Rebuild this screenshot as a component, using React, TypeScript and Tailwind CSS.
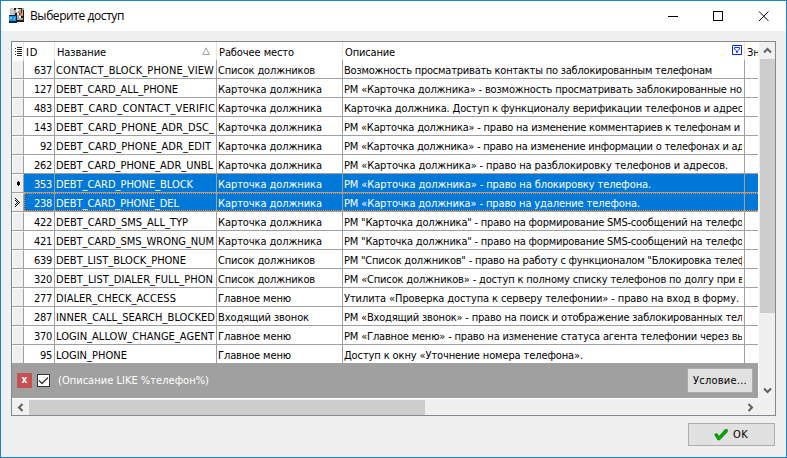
import { useLayoutEffect, useRef, useState } from "react";

/* Text run fitted to a given width by adjusting the tracking. */
function T({ w, children, className = "" }: { w: number; children: string; className?: string }) {
  const ref = useRef<HTMLSpanElement>(null);
  const [ls, setLs] = useState(0);
  useLayoutEffect(() => {
    const el = ref.current;
    if (el) setLs((w - el.getBoundingClientRect().width) / children.length);
  }, [w, children]);
  return (
    <span ref={ref} className={"inline-block whitespace-pre " + className} style={{ letterSpacing: ls }}>
      {children}
    </span>
  );
}

type Row = [string, string, number, string, number, string, number];
const SP: [string, number] = ["Список должников", 97];
const KD: [string, number] = ["Карточка должника", 104];
const GM: [string, number] = ["Главное меню", 73];
const rows: Row[] = [
  ["637", "CONTACT_BLOCK_PHONE_VIEW", 158, ...SP, "Возможность просматривать контакты по заблокированным телефонам", 368],
  ["127", "DEBT_CARD_ALL_PHONE", 122, ...KD, "РМ «Карточка должника» - возможность просматривать заблокированные но", 398],
  ["483", "DEBT_CARD_CONTACT_VERIFIC", 159, ...KD, "Карточка должника. Доступ к функционалу верификации телефонов и адрес", 399],
  ["143", "DEBT_CARD_PHONE_ADR_DSC_", 158, ...KD, "РМ «Карточка должника» - право на изменение комментариев к телефонам и", 396],
  ["92", "DEBT_CARD_PHONE_ADR_EDIT", 155, ...KD, "РМ «Карточка должника» - право на изменение информации о телефонах и ад", 400],
  ["262", "DEBT_CARD_PHONE_ADR_UNBL", 157, ...KD, "РМ «Карточка должника» - право на разблокировку телефонов и адресов.", 384],
  ["353", "DEBT_CARD_PHONE_BLOCK", 137, ...KD, "РМ «Карточка должника» - право на блокировку телефона.", 307],
  ["238", "DEBT_CARD_PHONE_DEL", 123, ...KD, "РМ «Карточка должника» - право на удаление телефона.", 296],
  ["422", "DEBT_CARD_SMS_ALL_TYP", 132, ...KD, "РМ \"Карточка должника\" - право на формирование SMS-сообщений на телефо", 399],
  ["421", "DEBT_CARD_SMS_WRONG_NUM", 158, ...KD, "РМ \"Карточка должника\" - право на формирование SMS-сообщений на телефо", 399],
  ["639", "DEBT_LIST_BLOCK_PHONE", 130, ...SP, "РМ \"Список должников\" - право на работу с функционалом \"Блокировка телеф", 402],
  ["320", "DEBT_LIST_DIALER_FULL_PHON", 157, ...SP, "РМ «Список должников» - доступ к полному списку телефонов по долгу при в", 400],
  ["277", "DIALER_CHECK_ACCESS", 120, ...GM, "Утилита «Проверка доступа к серверу телефонии» - право на вход в форму.", 395],
  ["287", "INNER_CALL_SEARCH_BLOCKED", 159, "Входящий звонок", 91, "РМ «Входящий звонок» - право на поиск и отображение заблокированных тел", 399],
  ["370", "LOGIN_ALLOW_CHANGE_AGENT", 158, ...GM, "РМ «Главное меню» - право на изменение статуса агента телефонии через вы", 401],
  ["95", "LOGIN_PHONE", 71, ...GM, "Доступ к окну «Уточнение номера телефона».", 239],
];

function Chevron({ d }: { d: string }) {
  return (
    <svg width="9" height="9" viewBox="0 0 9 9" fill="none" stroke="#606060" strokeWidth="2">
      <path d={d} />
    </svg>
  );
}

function GridRow({ row, i }: { row: Row; i: number }) {
  const [id, name, nw, place, pw, desc, dw] = row;
  const sel = i === 6 || i === 7;
  const last = i === rows.length - 1;
  const cell = "shrink-0 overflow-hidden border-r border-[#a0a0a0] pl-px";
  return (
    <div className={"relative flex w-[746px] border-[#a0a0a0] leading-[21px] " + (last ? "h-[18px] " : "h-[19px] border-b ") + (sel ? "bg-[#0078d7] text-white" : "bg-white")}>
      <div className="flex w-3 shrink-0 items-center justify-center border-t border-r border-l border-t-white border-r-[#a0a0a0] border-l-white bg-[#f0f0f0]">
        {i === 6 && (
          <svg width="5" height="5" viewBox="0 0 5 5" shapeRendering="crispEdges"><path d="M2 0h1v1h1v3h-1v1h-1v-1h-1v-3h1z" fill="#000" /></svg>
        )}
        {i === 7 && (
          <svg width="6" height="9" viewBox="0 0 6 9" shapeRendering="crispEdges"><path d="M0 0h1v1H0zM1 1h1v1H1zM0 2h1v1H0zM2 2h1v1H2zM1 3h1v1H1zM3 3h1v1H3zM2 4h1v1H2zM4 4h1v1H4zM1 5h1v1H1zM3 5h1v1H3zM0 6h1v1H0zM2 6h1v1H2zM1 7h1v1H1zM0 8h1v1H0z" fill="#000" /></svg>
        )}
      </div>
      <div className="w-[31px] shrink-0 overflow-hidden border-r border-[#a0a0a0] pr-[2px] text-right"><T w={id.length * 6}>{id}</T></div>
      <div className={cell + " w-[162px]"}><T w={nw}>{name}</T></div>
      <div className={cell + " w-[126px]"}><T w={pw}>{place}</T></div>
      <div className="w-[402px] shrink-0 border-r border-[#a0a0a0] pr-[2px] pl-px"><div className="h-[18px] overflow-hidden whitespace-nowrap"><T w={dw}>{desc}</T></div></div>
      {i === 7 && <div className="absolute top-0 left-3 h-[18px] w-[734px] border-y border-l border-dotted border-[#ff8728]" />}
    </div>
  );
}

export default function App() {
  return (
    <div className="flex h-[458px] w-[787px] flex-col border border-[#1883d7] bg-[#f0f0f0] font-['DejaVu_Sans_Condensed','DejaVu_Sans',sans-serif] text-[11px] text-black">
      <header className="flex h-[30px] shrink-0 items-center bg-white pl-2">
        <svg width="16" height="16" viewBox="0 0 16 16" shapeRendering="crispEdges">
          <path d="M1 0h14v13H1z" fill="#a8a8a8" />
          <path d="M1 0h4v7H1z" fill="#c8c8c8" />
          <path d="M5 0h2v2H5zM9 0h4v1H9zM14 2h1v11h-1zM8 12h7v2H8zM6 5h2v2H6zM12 8h2v2h-2z" fill="#1c1c1c" />
          <path d="M7 1h3v3H7zM8 5h2v2H8zM10 8h2v2h-2z" fill="#f4f4f4" />
          <path d="M9 3h2v2H9zM11 5h2v3h-2zM12 7h2v1h-2z" fill="#e88030" />
          <path d="M12 1h1v4h-1zM10 5h1v2h-1z" fill="#333" />
          <path d="M0 7h8v8H0z" fill="#10243c" />
          <path d="M0 8h7v5H0z" fill="#1b8ce0" />
          <path d="M1 9h2v2H1zM5 9h1v3H5z" fill="#69c4ff" />
        </svg>
        <span className="ml-[5px] font-['Open_Sans',sans-serif] text-[12px]"><T w={94}>Выберите доступ</T></span>
        <svg className="mr-[17px] ml-auto" width="101" height="11" viewBox="0 0 101 11" fill="none" stroke="#000">
          <path d="M0 5.5h10M45.5.5h9v9h-9z" shapeRendering="crispEdges" /><path d="M91 .5l9.500 9.500M100.500.5L91 10" />
        </svg>
      </header>

      <main className="mt-[10px] ml-[10px] flex h-[375px] w-[765px] shrink-0 flex-col border border-[#828790]">
        <div className="flex h-[357px] shrink-0">
          <div className="flex w-[747px] shrink-0 flex-col border-r border-b border-white">
            <div className="flex h-[18px] w-[746px] shrink-0 bg-white leading-[21px]">
              <div className="flex w-3 shrink-0 items-center justify-center border-r border-[#e5e5e5] pl-[2px]">
                <svg width="7" height="9" viewBox="0 0 7 9" shapeRendering="crispEdges"><path d="M0 1h1v1H0zM2 0h5v1H2zM2 2h5v1H2zM0 4h1v1H0zM2 4h5v1H2zM2 6h5v1H2zM0 7h1v1H0zM2 8h5v1H2z" fill="#222" /></svg>
              </div>
              <div className="w-[31px] shrink-0 border-r border-[#e5e5e5] pl-[2px]"><T w={12}>ID</T></div>
              <div className="flex w-[162px] shrink-0 justify-between border-r border-[#e5e5e5] pr-[6px] pl-[2px]">
                <T w={49}>Название</T>
                <svg className="mt-[5px]" width="8" height="8" viewBox="0 0 8 8"><path d="M4 .8L7.400 7.500H.6z" fill="none" stroke="#a0a0a0" /></svg>
              </div>
              <div className="w-[126px] shrink-0 border-r border-[#e5e5e5] pl-[2px]"><T w={75}>Рабочее место</T></div>
              <div className="flex w-[402px] shrink-0 justify-between border-r border-[#e5e5e5] pr-[2px] pl-[2px]">
                <T w={50}>Описание</T>
                <svg className="mt-[3px]" width="10" height="10" viewBox="0 0 10 10" fill="none" stroke="#0020ff"><path d="M.5.5h9v9h-9z" /><path d="M2.500 2.500h5v1.500L5.500 6v1.500h-1V6l-2-2z" strokeWidth=".9" /></svg>
              </div>
              <div className="w-[13px] overflow-hidden pl-[2px]">Зн</div>
            </div>
            {rows.map((r, i) => <GridRow key={r[0]} row={r} i={i} />)}
            <div className="flex h-[35px] w-[746px] shrink-0 items-center bg-[#a0a0a0] pl-[5px] text-white">
              <div className="flex h-[15px] w-[15px] items-center justify-center bg-[#c75050] pb-[2px] text-[10px] font-bold">x</div>
              <div className="ml-[5px] flex h-[13px] w-[13px] items-center justify-center border border-[#333] bg-white">
                <svg width="11" height="9" viewBox="0 0 11 9"><path d="M1 4.500L4 7.500 10 1.500" fill="none" stroke="#333" strokeWidth="1.300" /></svg>
              </div>
              <span className="ml-[8px] pt-[2px]"><T w={151}>(Описание LIKE %телефон%)</T></span>
              <button className="mr-[5px] ml-auto flex h-[25px] w-[66px] items-center justify-center border border-[#adadad] bg-[#e1e1e1] pt-[2px] text-black"><T w={54}>Условие...</T></button>
            </div>
          </div>
          <div className="flex w-4 flex-col items-center">
            <div className="flex h-[17px] items-center"><Chevron d="M1 6.500L4.500 3 8 6.500" /></div>
            <div className="h-[254px] w-[15px] bg-[#cdcdcd]" />
            <div className="mt-auto mb-[4px]"><Chevron d="M1 2.500L4.500 6 8 2.500" /></div>
          </div>
        </div>
        <div className="flex h-4 items-center">
          <div className="flex w-[17px] justify-center"><Chevron d="M6.500 1L3 4.500 6.500 8" /></div>
          <div className="h-[15px] w-[396px] bg-[#cdcdcd]" />
          <div className="mr-[20px] ml-auto"><Chevron d="M2.500 1L6 4.500 2.500 8" /></div>
        </div>
      </main>

      <button className="mt-[7px] mr-[11px] flex h-[23px] w-[87px] shrink-0 items-center self-end border border-[#adadad] bg-[#e1e1e1] pl-[25px]">
        <svg width="14" height="13" viewBox="0 0 14 13"><path d="M.5 6.500l2.500-1 2 3L11 1.500h2.300v2.500L5.500 12H4z" fill="#00a800" stroke="#087808" strokeWidth=".7" /></svg>
        <span className="ml-[5px] pt-px"><T w={15}>OK</T></span>
      </button>
    </div>
  );
}
